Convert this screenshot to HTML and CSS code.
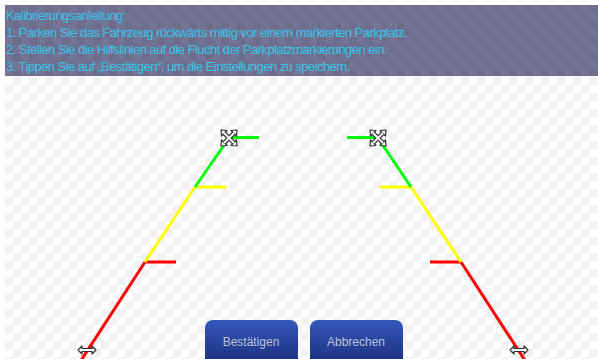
FILE: index.html
```html
<!DOCTYPE html>
<html lang="de">
<head>
  <meta charset="UTF-8" />
  <title>Kalibrierung</title>
  <link rel="stylesheet" href="styles.css">
</head>
<body>
  <div class="screen">
    <div class="guide">
      <p>Kalibrierungsanleitung:</p>
      <p>1. Parken Sie das Fahrzeug rückwärts mittig vor einem markierten Parkplatz.</p>
      <p>2. Stellen Sie die Hilfslinien auf die Flucht der Parkplatzmarkierungen ein.</p>
      <p>3. Tippen Sie auf „Bestätigen“, um die Einstellungen zu speichern.</p>
    </div>

    <div class="stage">
      <svg class="lines" viewBox="5 76 593 283" width="593" height="283">
        <defs>
          <g id="move">
            <path d="M-5 -5 L5 5 M5 -5 L-5 5" stroke="#333" stroke-width="4.5" fill="none"/>
            <path d="M-8 -8 L-2 -7.5 L-7.5 -2 Z M8 -8 L2 -7.5 L7.5 -2 Z M-8 8 L-2 7.5 L-7.5 2 Z M8 8 L2 7.5 L7.5 2 Z" fill="#fff" stroke="#333" stroke-width="1.2" stroke-linejoin="round"/>
            <path d="M-5 -5 L5 5 M5 -5 L-5 5" stroke="#fff" stroke-width="2" fill="none"/>
          </g>
          <g id="slide">
            <path d="M-9 0 L-5 -4 L-5 -1.5 L5 -1.5 L5 -4 L9 0 L5 4 L5 1.5 L-5 1.5 L-5 4 Z" fill="#fff" stroke="#333" stroke-width="1.2" stroke-linejoin="round"/>
          </g>
        </defs>

        <!-- left guide -->
        <g fill="none" stroke-width="3" stroke-linecap="butt">
          <path d="M145 262 L80 362 M145 262 L176 262" stroke="#ff0000"/>
          <path d="M195 187 L145 262 M195 187 L226 187" stroke="#ffff00"/>
          <path d="M229 138 L195 187 M229 137.5 L259 137.5" stroke="#00ff00"/>
        </g>
        <!-- right guide -->
        <g fill="none" stroke-width="3" stroke-linecap="butt">
          <path d="M461 262 L526 362 M461 262 L430 262" stroke="#ff0000"/>
          <path d="M411 187 L461 262 M411 187 L380 187" stroke="#ffff00"/>
          <path d="M378 138 L411 187 M378 137.5 L347 137.5" stroke="#00ff00"/>
        </g>

        <use href="#move" x="229" y="138"/>
        <use href="#move" x="378" y="138"/>
        <use href="#slide" x="87" y="350"/>
        <use href="#slide" x="519" y="350"/>
      </svg>

      <div class="actions">
        <button class="btn">Bestätigen</button>
        <button class="btn">Abbrechen</button>
      </div>
    </div>
  </div>
</body>
</html>
```

FILE: styles.css
```css
html, body {
  margin: 0;
  padding: 0;
  height: 100%;
  overflow: hidden;
  background: #ffffff;
  font-family: 'Liberation Sans', sans-serif;
}

.screen {
  margin: 5px 0 0 5px;
  height: calc(100% - 5px);
  display: flex;
  flex-direction: column;
  background: repeating-conic-gradient(#ffffff 0 25%, #f2f2f5 0 50%) 0 0 / 16px 16px;
}

.guide {
  height: 71px;
  box-sizing: border-box;
  padding: 2px 0 0 1px;
  background: repeating-conic-gradient(#6d6d8e 0 25%, #747496 0 50%) 0 0 / 16px 16px;
  color: #35c5e6;
  font-size: 13px;
  line-height: 17px;
  letter-spacing: -0.55px;
}

.guide p {
  margin: 0;
  white-space: nowrap;
}

.stage {
  position: relative;
  flex: 1;
  display: flex;
  align-items: flex-end;
  justify-content: center;
}

.lines {
  position: absolute;
  left: 0;
  top: 0;
}

.actions {
  position: relative;
  display: flex;
  gap: 12px;
  margin: 0 0 -1px 4px;
}

.btn {
  width: 93px;
  height: 40px;
  padding: 4px 0 0;
  border: none;
  border-radius: 8px 8px 0 0;
  background: linear-gradient(#3658bb, #1c3482);
  color: #b9c1da;
  font-family: 'Liberation Sans', sans-serif;
  font-size: 12px;
}
```
